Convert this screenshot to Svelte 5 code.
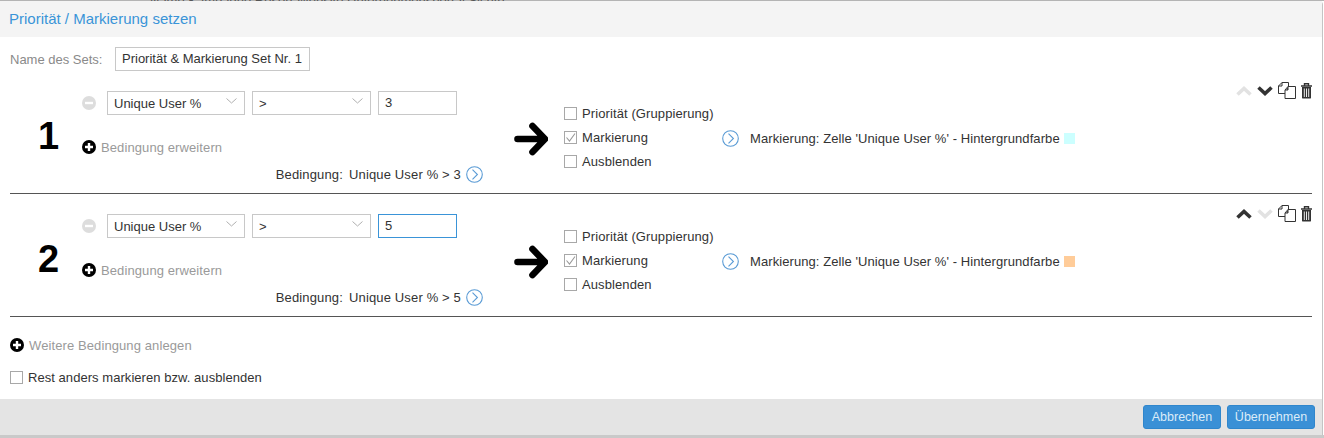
<script>
  const rules = [
    { nr: 1, value: "3", color: "#ccffff", focused: false, upOn: false, downOn: true },
    { nr: 2, value: "5", color: "#ffcc99", focused: true, upOn: true, downOn: false }
  ];
  const behind = ["-", "Resort", "*", "Website Unternehmensportal", "1,1", "0,00%", "1,5", "0,51", "8%", "114", "5,01", "56", "18,5", "86,05", "", "100"];
</script>

{#snippet goIcon()}
  <svg class="go" width="17" height="17" viewBox="0 0 17 17">
    <circle cx="8.5" cy="8.5" r="7.8" fill="none" stroke="#5a9bd5" stroke-width="1.1" />
    <path d="M6.5 3.6 L11.4 8.5 L6.5 13.4" fill="none" stroke="#5a9bd5" stroke-width="1.1" />
  </svg>
{/snippet}

{#snippet plusIcon()}
  <svg class="plus" width="14" height="14" viewBox="0 0 14 14">
    <circle cx="7" cy="7" r="7" fill="#000" />
    <path d="M7 3 V11 M3 7 H11" stroke="#fff" stroke-width="2.4" />
  </svg>
{/snippet}

{#snippet chevron()}
  <svg class="select-arrow" width="11" height="6" viewBox="0 0 11 6">
    <path d="M0.5 0.5 L5.5 5 L10.5 0.5" fill="none" stroke="#b0b0b0" stroke-width="1" />
  </svg>
{/snippet}

<div class="page">
  <div class="behind-top"><span>Name Kampagne Resort Website Unternehmensportal Sichtbarkeit Nutzer Sitzungen gesamt Seitenaufrufe Besuchsdauer Absprungrate</span></div>
  <div class="behind-bottom">
    {#each behind as cell}<span>{cell}</span>{/each}
  </div>

  <div class="dialog">
    <header class="title">Priorität / Markierung setzen</header>

    <div class="body">
      <div class="name-row">
        <span class="name-label">Name des Sets:</span>
        <div class="field name-field">Priorität &amp; Markierung Set Nr. 1</div>
      </div>

      {#each rules as rule}
        <section class="rule">
          <div class="nr">{rule.nr}</div>

          <div class="condition">
            <div class="cond-row">
              <svg class="minus" width="14" height="14" viewBox="0 0 14 14">
                <circle cx="7" cy="7" r="7" fill="#dddddd" />
                <rect x="3" y="5.8" width="8" height="2.4" fill="#fff" />
              </svg>
              <div class="field select sel-a">Unique User %{@render chevron()}</div>
              <div class="field select sel-b">&gt;{@render chevron()}</div>
              <div class="field val" class:focused={rule.focused}>{rule.value}</div>
            </div>
            <div class="extend">
              {@render plusIcon()}
              <span class="muted">Bedingung erweitern</span>
            </div>
            <div class="summary">
              <span class="summary-label">Bedingung:</span>
              <span>Unique User % &gt; {rule.value}</span>
              {@render goIcon()}
            </div>
          </div>

          <svg class="arrow" width="34" height="34" viewBox="0 0 34 34">
            <path d="M3.5 17 H28 M18.5 4 L31 17 L18.5 30" fill="none" stroke="#000" stroke-width="6.6" stroke-linecap="round" stroke-linejoin="round" />
          </svg>

          <div class="checks">
            <div class="check"><span class="box"></span>Priorität (Gruppierung)</div>
            <div class="check">
              <span class="box">
                <svg width="11" height="11" viewBox="0 0 11 11">
                  <path d="M1.5 5.5 L4.5 9 L10 1.5" fill="none" stroke="#999" stroke-width="1.1" />
                </svg>
              </span>Markierung
            </div>
            <div class="check"><span class="box"></span>Ausblenden</div>
          </div>

          <div class="mark">
            {@render goIcon()}
            <span class="mark-text">Markierung: Zelle 'Unique User %' - Hintergrundfarbe</span>
            <span class="swatch" style="background: {rule.color}"></span>
          </div>

          <div class="tools">
            <svg width="16" height="10" viewBox="0 0 16 10">
              <path d="M1.5 8.5 L8 2.5 L14.5 8.5" fill="none" stroke={rule.upOn ? "#333" : "#e2e2e2"} stroke-width="3.6" />
            </svg>
            <svg width="16" height="10" viewBox="0 0 16 10">
              <path d="M1.5 1.5 L8 7.5 L14.5 1.5" fill="none" stroke={rule.downOn ? "#333" : "#e2e2e2"} stroke-width="3.6" />
            </svg>
            <svg class="copy" width="18" height="17" viewBox="0 0 18 17">
              <path d="M4 0.5 H10.5 V5 L7 11.5 H0.5 V4 Z M0.5 4 H4 V0.5" fill="#fff" stroke="#333" stroke-width="1" />
              <path d="M10 4.5 H17.5 V16.5 H7 V8 Z M7 8 H10 V4.5" fill="#fff" stroke="#333" stroke-width="1" />
            </svg>
            <svg class="trash" width="11" height="16" viewBox="0 0 11 16">
              <path d="M0 3 H11 M3.5 2.5 V0.8 H7.5 V2.5" fill="none" stroke="#333" stroke-width="1.4" />
              <path d="M1 4 H10 V14.4 Q10 15.6 8.8 15.6 H2.2 Q1 15.6 1 14.4 Z" fill="#333" />
              <path d="M3.3 5.5 V14 M5.5 5.5 V14 M7.7 5.5 V14" stroke="#fff" stroke-width="0.9" />
            </svg>
          </div>
        </section>
      {/each}

      <div class="more">
        {@render plusIcon()}
        <span class="muted">Weitere Bedingung anlegen</span>
      </div>
      <div class="rest"><span class="box"></span>Rest anders markieren bzw. ausblenden</div>
    </div>

    <footer class="actions">
      <button class="cancel">Abbrechen</button>
      <button class="apply">Übernehmen</button>
    </footer>
  </div>
</div>

<style>
  :global(body) {
    margin: 0;
    background: #fff;
    font-family: "Liberation Sans", Arial, sans-serif;
  }

  .page {
    width: 1324px;
    height: 438px;
    overflow: hidden;
    position: relative;
    background: #fff;
  }

  /* the table behind the dialog only peeks out at the top and bottom edge */
  .behind-top {
    height: 1px;
    overflow: hidden;
    background: #b4b4b4;
    font-size: 13px;
    line-height: 1px;
    padding-left: 150px;
    color: #555;
    white-space: nowrap;
  }

  .behind-top span {
    display: block;
    width: 355px;
    overflow: hidden;
  }

  .behind-bottom {
    position: absolute;
    left: 0;
    top: 435px;
    width: 1324px;
    height: 3px;
    overflow: hidden;
    background: #c9c9c9;
    display: grid;
    grid-template-columns: 30px 260px 73px 230px 87px 72px 48px 57px 40px 68px 67px 46px 72px 50px 64px 60px;
    font-size: 13px;
    line-height: 16px;
    color: #333;
    white-space: nowrap;
  }

  .dialog {
    position: absolute;
    left: 0;
    top: 1px;
    width: 1323px;
    height: 434px;
    border-right: 1px solid #c4c4c4;
    border-top-right-radius: 4px;
    box-sizing: border-box;
    display: flex;
    flex-direction: column;
  }

  .title {
    height: 36px;
    flex: none;
    box-sizing: border-box;
    background: #f4f4f4;
    color: #3a94d8;
    font-size: 15px;
    line-height: 36px;
    padding-left: 9px;
  }

  .body {
    flex: 1;
    background: #fff;
    padding: 10px 10px 0 10px;
  }

  .name-row {
    display: flex;
    align-items: center;
    height: 24px;
    font-size: 13px;
    color: #8a8a8a;
  }

  .name-label {
    width: 105px;
    flex: none;
  }

  .name-field {
    width: 195px;
    color: #333;
  }

  .field {
    box-sizing: border-box;
    height: 24px;
    border: 1px solid #c8c8c8;
    background: #fff;
    font-size: 13px;
    line-height: 22px;
    padding-left: 6px;
    color: #333;
    position: relative;
    flex: none;
  }

  .select {
    padding-top: 1px;
  }

  .select-arrow {
    position: absolute;
    right: 7px;
    top: 6px;
  }

  .sel-a { width: 138px; }
  .sel-b { width: 119px; }
  .val { width: 79px; }
  .focused { border-color: #3a94d8; }

  .rule {
    height: 123px;
    box-sizing: border-box;
    width: 1302px;
    border-bottom: 1px solid #555;
    display: flex;
    padding-top: 20px;
    position: relative;
    font-size: 13px;
    color: #333;
  }

  .nr {
    width: 72px;
    flex: none;
    padding-top: 23px;
    padding-left: 28px;
    box-sizing: border-box;
    font-size: 38px;
    font-weight: bold;
    line-height: 44px;
    color: #000;
  }

  .condition {
    width: 401px;
    flex: none;
  }

  .cond-row {
    display: flex;
    align-items: center;
    gap: 7px;
  }

  .minus {
    margin-right: 4px;
    flex: none;
  }

  .extend {
    display: flex;
    align-items: center;
    gap: 5px;
    margin-top: 25px;
    height: 14px;
  }

  .muted {
    color: #9a9a9a;
    font-size: 13px;
    letter-spacing: 0.1px;
  }

  .summary {
    display: flex;
    align-items: center;
    justify-content: flex-end;
    gap: 5px;
    margin-top: 12px;
    height: 17px;
    letter-spacing: 0.15px;
  }

  .summary-label {
    margin-right: 1px;
  }

  .go {
    flex: none;
  }

  .arrow {
    flex: none;
    margin-top: 31px;
    margin-left: 31px;
  }

  .checks {
    margin-left: 16px;
    width: 158px;
    flex: none;
    padding-top: 10px;
    letter-spacing: 0.1px;
  }

  .check {
    display: flex;
    align-items: center;
    gap: 5px;
    height: 24px;
  }

  .box {
    width: 13px;
    height: 13px;
    box-sizing: border-box;
    border: 1px solid #a8a8a8;
    background: #fff;
    flex: none;
    display: block;
  }

  .box svg {
    display: block;
  }

  .mark {
    display: flex;
    align-items: center;
    height: 17px;
    margin-top: 39px;
  }

  .mark-text {
    margin-left: 11px;
    margin-right: 4px;
    letter-spacing: 0.08px;
  }

  .swatch {
    width: 11px;
    height: 11px;
    display: block;
  }

  .tools {
    position: absolute;
    right: 0;
    top: 11px;
    display: flex;
    align-items: center;
    gap: 5px;
  }

  .more {
    display: flex;
    align-items: center;
    gap: 5px;
    margin-top: 21px;
    height: 14px;
  }

  .rest {
    display: flex;
    align-items: center;
    gap: 5px;
    margin-top: 18px;
    font-size: 13px;
    letter-spacing: 0.05px;
    color: #333;
  }

  .actions {
    height: 36px;
    flex: none;
    background: #e4e4e4;
    display: flex;
    justify-content: flex-end;
    align-items: center;
    gap: 6px;
    padding-right: 7px;
  }

  button {
    height: 24px;
    box-sizing: border-box;
    border: 1px solid #2f86cc;
    border-radius: 3px;
    background: #3a90d6;
    color: #dcecf8;
    font: 12.5px "Liberation Sans", Arial, sans-serif;
    padding: 0;
  }

  .cancel { width: 78px; }
  .apply { width: 88px; }
</style>
